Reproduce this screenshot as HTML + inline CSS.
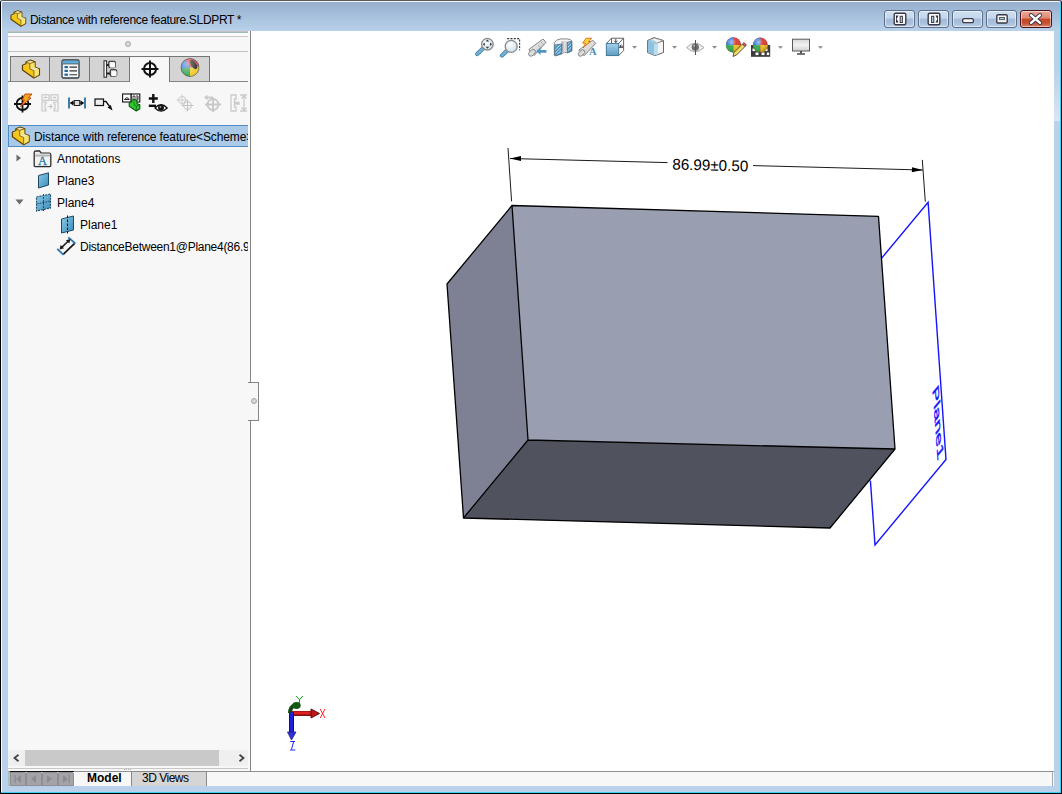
<!DOCTYPE html>
<html><head><meta charset="utf-8">
<style>
*{margin:0;padding:0;box-sizing:border-box}
html,body{width:1062px;height:794px;overflow:hidden;background:#b9d1ea;font-family:"Liberation Sans",sans-serif;font-size:12px;color:#000}
.a{position:absolute}
svg{position:absolute;overflow:visible}
#win{position:absolute;left:0;top:0;width:1062px;height:794px;background:#b9d1ea;border:1px solid #000;border-top-color:#5a5a5a;border-radius:3px 3px 0 0}
#titlegrad{position:absolute;left:1px;top:1px;width:1059px;height:30px;background:linear-gradient(#95afce,#b9d1ea);border-radius:2px 2px 0 0;border-top:1px solid #f4f8fc;border-left:1px solid #f4f8fc}
.btn{position:absolute;top:10px;width:31px;height:18px;border:1px solid #5d6f88;border-radius:3px;background:linear-gradient(#cfdff0 0%,#c3d6ec 45%,#a4bcd8 50%,#a9c1dc 75%,#bcd1e8 100%);box-shadow:inset 0 0 0 1px rgba(255,255,255,.5)}
.close{background:linear-gradient(#eaa898 0%,#de8a74 45%,#c4462a 50%,#c4502e 75%,#d8826a 100%);border-color:#4a1018}
#panel{position:absolute;left:8px;top:31px;width:242px;height:740px;background:#f7f7f7;overflow:hidden}
#vp{position:absolute;left:251px;top:31px;width:803px;height:740px;background:#fff;overflow:hidden}
.hl{position:absolute;height:1px}
.tab{position:absolute;top:25px;width:40px;height:25px;background:#d4d4d4;border:1px solid #767676;border-bottom:none}
.txt{position:absolute;white-space:nowrap;font-size:12px;line-height:14px}
</style></head><body>
<svg width="0" height="0" style="position:absolute"><defs>
<symbol id="part" viewBox="0 0 22 22">
  <path d="M3.0 7.2 L6.0 6.0 L6.0 4.3 L9.9 2.7 L13.9 4.3 L13.9 8.9 L17.7 10.2 L17.7 15.5 L12.9 18.2 L3.0 11.2 Z" fill="#f5c518" stroke="#5e4206" stroke-width="1.1" stroke-linejoin="round"/>
  <path d="M3.5 7.4 L6.0 6.4 L6.6 6.8 L4.2 7.9 Z" fill="#ecdca8"/>
  <path d="M6.5 4.4 L9.9 3.1 L13.4 4.5 L9.4 5.7 Z" fill="#efe2b0"/>
  <path d="M9.4 5.7 L13.5 4.5 L13.5 8.9 L9.4 10.2 Z" fill="#f6e472"/>
  <path d="M9.4 10.2 L13.5 8.9 L17.3 10.3 L12.9 11.9 Z" fill="#f2e6b4"/>
  <path d="M12.9 11.9 L17.3 10.3 L17.3 15.3 L12.9 17.8 Z" fill="#f6e470"/>
  <path d="M9.4 5.6 L9.4 10.2 L12.9 11.9 L12.9 18.2 M6.2 4.5 L9.4 5.6 L13.6 4.4" fill="none" stroke="#7a5a10" stroke-width="0.75"/>
</symbol>
</defs></svg>
<div id="win"></div>
<div id="titlegrad"></div>
<!-- right/bottom cyan edge -->
<div class="a" style="left:1060px;top:3px;width:1px;height:790px;background:#3fd0f0"></div>
<div class="a" style="left:1px;top:792px;width:1060px;height:1px;background:#3fd0f0"></div>
<div class="a" style="left:1px;top:31px;width:1px;height:761px;background:#fafcfe"></div>
<div class="a" style="left:1054px;top:70px;width:6px;height:51px;background:linear-gradient(#b9d1ea,#d8e6f4)"></div>

<!-- title icon -->
<svg style="left:8px;top:8px" width="22" height="22"><use href="#part"/></svg>
<div class="txt" style="left:30px;top:13px;letter-spacing:-0.33px;color:#000">Distance with reference feature.SLDPRT *</div>

<!-- caption buttons -->
<div class="btn" style="left:884px"><svg style="left:8px;top:1px" width="14" height="14" viewBox="0 0 14 14">
  <rect x="1.2" y="1.2" width="11.6" height="11.6" rx="1.5" fill="#fafafa" stroke="#3a3a48" stroke-width="1.4"/>
  <rect x="7.2" y="4.3" width="2.2" height="6.2" fill="#b8d4ee" stroke="#3a3a48" stroke-width="1"/>
  <path d="M3 3.5 L5.5 3.5 L3.5 7 L5.5 10.5 L3 10.5 Z" fill="#2a2a38"/>
</svg></div>
<div class="btn" style="left:918px"><svg style="left:8px;top:1px" width="14" height="14" viewBox="0 0 14 14">
  <rect x="1.2" y="1.2" width="11.6" height="11.6" rx="1.5" fill="#fafafa" stroke="#3a3a48" stroke-width="1.4"/>
  <rect x="4.6" y="4.3" width="2.2" height="6.2" fill="#b8d4ee" stroke="#3a3a48" stroke-width="1"/>
  <path d="M11 3.5 L8.5 3.5 L10.5 7 L8.5 10.5 L11 10.5 Z" fill="#2a2a38"/>
</svg></div>
<div class="btn" style="left:952px"><svg style="left:9px;top:7px" width="12" height="6" viewBox="0 0 12 6">
  <rect x="0.7" y="0.7" width="10.6" height="4" rx="1.2" fill="#f7f7f7" stroke="#3a3a48" stroke-width="1.3"/>
</svg></div>
<div class="btn" style="left:986px"><svg style="left:9px;top:3px" width="12" height="10" viewBox="0 0 12 10">
  <rect x="0.8" y="0.8" width="10.4" height="8.2" rx="1.2" fill="#f7f7f7" stroke="#3a3a48" stroke-width="1.4"/>
  <rect x="3.6" y="3.5" width="4.8" height="2.2" fill="#a8c8e6" stroke="#3a3a48" stroke-width="0.8"/>
</svg></div>
<div class="btn close" style="left:1020px;width:32px"><svg style="left:8px;top:3px" width="13" height="10" viewBox="0 0 13 10"><path d="M2 1.2 L11 8.8 M11 1.2 L2 8.8" stroke="#3a3a50" stroke-width="4.2" stroke-linecap="round"/><path d="M2 1.2 L11 8.8 M11 1.2 L2 8.8" stroke="#fff" stroke-width="2.4" stroke-linecap="round"/></svg></div>

<!-- ===== LEFT PANEL ===== -->
<div id="panel">
  <div class="hl" style="left:0;top:0;width:240px;background:#c4c0ba"></div>
  <div class="hl" style="left:0;top:1px;width:240px;background:#a0b9ba"></div>
  <div class="hl" style="left:0;top:2px;width:240px;height:3px;background:#fbfbfb"></div>
  <div class="hl" style="left:0;top:5px;width:240px;background:#c8c8c8"></div>
  <div class="a" style="left:117px;top:10px;width:6px;height:6px;border-radius:50%;background:radial-gradient(#e4e4e4,#c8c8c8);border:1px solid #a8a8a8"></div>
  <div class="hl" style="left:0;top:20px;width:240px;background:#c2c2c2"></div>
  <div id="panelbody">
  <!-- tabs -->
  <div class="hl" style="left:0;top:50px;width:240px;background:#858585"></div>
  <div class="tab" style="left:2px"></div>
  <div class="tab" style="left:41px;width:41px"></div>
  <div class="tab" style="left:81px;width:41px"></div>
  <div class="tab" style="left:121px;width:41px;background:#f7f7f7;height:26px"></div>
  <div class="tab" style="left:161px;width:41px"></div>
  <!-- tab icons -->
  <svg style="left:10.5px;top:25.5px" width="25.4" height="25.4" viewBox="0 0 22 22"><use href="#part" width="22" height="22"/></svg>
  <svg style="left:53px;top:28px" width="19" height="20" viewBox="0 0 19 20">
    <rect x="1" y="1" width="17" height="18" rx="1.5" fill="#f4f6f8" stroke="#2f3a44" stroke-width="1.3"/>
    <rect x="1.7" y="1.7" width="15.6" height="3" fill="#5aaedc"/>
    <path d="M1.5 4.9 H17.5" stroke="#2f3a44" stroke-width="0.8"/>
    <rect x="3.5" y="7" width="3.4" height="2.2" fill="#1e6aa0"/><rect x="3.5" y="10.8" width="3.4" height="2.2" fill="#1e6aa0"/><rect x="3.5" y="14.6" width="3.4" height="2.2" fill="#1e6aa0"/>
    <path d="M8.5 8.1 H16 M8.5 11.9 H16 M8.5 15.7 H16" stroke="#333" stroke-width="1.1"/>
  </svg>
  <svg style="left:95px;top:29px" width="18" height="18" viewBox="0 0 18 18">
    <rect x="1" y="0.8" width="2.6" height="16.4" fill="#fff" stroke="#222" stroke-width="1"/>
    <path d="M3.6 5 H6.5 M3.6 13.5 H7.5" stroke="#222" stroke-width="2"/>
    <rect x="5.8" y="1.2" width="6.5" height="6.5" rx="1.2" fill="#ddd" stroke="#222" stroke-width="1.1"/>
    <rect x="7.2" y="2.6" width="5" height="5" fill="#fafafa"/>
    <rect x="7.2" y="9.8" width="6.5" height="6.5" rx="1.2" fill="#ddd" stroke="#222" stroke-width="1.1"/>
    <rect x="8.6" y="11.2" width="5" height="5" fill="#fafafa"/>
  </svg>
  <svg style="left:133px;top:29px" width="18" height="18" viewBox="0 0 18 18">
    <circle cx="9" cy="9" r="6" fill="none" stroke="#111" stroke-width="2"/>
    <path d="M9 0.5 V17.5 M0.5 9 H17.5" stroke="#111" stroke-width="2"/>
  </svg>
  <svg style="left:172px;top:26px" width="20" height="21" viewBox="0 0 20 21">
    <defs><clipPath id="cw"><circle cx="10" cy="10.5" r="9"/></clipPath>
    <radialGradient id="sh" cx="0.35" cy="0.3" r="0.8"><stop offset="0" stop-color="#fff" stop-opacity="0.55"/><stop offset="1" stop-color="#fff" stop-opacity="0"/></radialGradient></defs>
    <g clip-path="url(#cw)">
      <rect x="0" y="0" width="20" height="21" fill="#2a6fd0"/>
      <path d="M10 10.5 L4 0 L20 0 L20 9 Z" fill="#e0302a"/>
      <path d="M10 10.5 L20 9 L20 21 L10 21 Z" fill="#f0c418"/>
      <path d="M10 10.5 L10 21 L0 21 L0 12 Z" fill="#28a040"/>
      <ellipse cx="13.5" cy="7.5" rx="2.6" ry="5.2" fill="#111" transform="rotate(-35 13.5 7.5)"/>
      <circle cx="10" cy="10.5" r="9" fill="url(#sh)"/>
    </g>
    <circle cx="10" cy="10.5" r="9" fill="none" stroke="#555" stroke-width="0.6"/>
  </svg>

  <!-- toolbar -->
  <svg style="left:5px;top:62px" width="20" height="20" viewBox="0 0 20 20">
    <circle cx="9.5" cy="11" r="6" fill="none" stroke="#111" stroke-width="1.8"/>
    <path d="M9.5 2.5 V19.5 M1 11 H18" stroke="#111" stroke-width="1.8"/>
    <path d="M12 1 L19 1 L15.5 5 L18 5 L7.5 13.5 L11.5 7 L9 7 Z" fill="#f2a81c" stroke="#c0380c" stroke-width="0.9" stroke-linejoin="round"/>
  </svg>
  <svg style="left:33px;top:63px" width="18" height="18" viewBox="0 0 18 18" fill="none" stroke="#c8c8c8" stroke-width="1.2">
    <rect x="1" y="0.8" width="7" height="5.5"/><rect x="10" y="0.8" width="7" height="5.5"/>
    <path d="M3 4 Q4.5 2.5 6 4 M12 4 Q13.5 2.5 15 4"/>
    <path d="M1 8 H5 V10 H4 V15 H5 V17 H1 Z M17 8 H13 V10 H14 V15 H13 V17 H17 Z"/>
    <path d="M6.5 12.5 H11 M9 10.5 L11 12.5 L9 14.5"/>
  </svg>
  <svg style="left:60px;top:63px" width="18" height="18" viewBox="0 0 18 18">
    <path d="M1 3.5 V14.5 M17 3.5 V14.5" stroke="#2a6ea0" stroke-width="1.8"/>
    <path d="M2.5 9 H15.5" stroke="#111" stroke-width="1.3"/>
    <path d="M2 9 L5.5 6.2 V11.8 Z M16 9 L12.5 6.2 V11.8 Z" fill="#111"/>
    <rect x="6.3" y="6.5" width="5.4" height="5" fill="#ddd" stroke="#222" stroke-width="1"/>
  </svg>
  <svg style="left:86px;top:63px" width="20" height="18" viewBox="0 0 20 18">
    <rect x="1" y="5" width="8.5" height="6.5" fill="#eee" stroke="#111" stroke-width="1.2"/>
    <path d="M9.5 7.5 H12 L16 13" fill="none" stroke="#111" stroke-width="1.3"/>
    <path d="M18.5 16.5 L13.5 13.5 L16.8 11 Z" fill="#111"/>
  </svg>
  <svg style="left:114px;top:62px" width="19" height="20" viewBox="0 0 19 20">
    <rect x="0.6" y="1" width="8.6" height="8" fill="#fff" stroke="#111" stroke-width="1.1"/>
    <rect x="9.2" y="1" width="8.6" height="8" fill="#fff" stroke="#111" stroke-width="1.1"/>
    <path d="M2.5 6.5 Q4.9 3 7.3 6.5 Z" fill="#fff" stroke="#111" stroke-width="0.9"/>
    <path d="M11 3 H13 V7 H11 Z M14 3 H16 V7 H14 M14 5 H16" stroke="#111" fill="none" stroke-width="0.8"/>
    <path d="M7.2 10 L9.6 8.8 L9.6 7.6 L12.3 6.4 L15 7.6 L15 10.8 L17.8 11.8 L17.8 15.8 L14.3 18 L7.2 13.2 Z" fill="#34c834" stroke="#0b5a0b" stroke-width="1.1" stroke-linejoin="round"/>
    <path d="M12 8.4 L12 11.8 L14.3 13.2 L14.3 18 M14.3 13.2 L17.6 11.9" fill="none" stroke="#0b5a0b" stroke-width="0.7"/>
  </svg>
  <svg style="left:140px;top:62px" width="20" height="20" viewBox="0 0 20 20">
    <path d="M5.3 1 V10 M0.8 5.5 H9.8" stroke="#111" stroke-width="2.4"/>
    <path d="M0.8 12.8 H8" stroke="#111" stroke-width="2.4"/>
    <path d="M7 15 Q13 8.5 19.2 15 Q13 21.2 7 15 Z" fill="#fff" stroke="#111" stroke-width="1.3"/>
    <circle cx="13" cy="14.8" r="3" fill="#111"/><circle cx="12.4" cy="14" r="0.9" fill="#999"/>
  </svg>
  <svg style="left:168px;top:63px" width="18" height="18" viewBox="0 0 18 18" fill="none" stroke="#d0d0d0" stroke-width="1.1">
    <circle cx="6" cy="6" r="3.5"/><path d="M6 0.5 V11.5 M0.5 6 H11.5"/>
    <circle cx="11.5" cy="11.5" r="3.8" stroke="#c4c4c4"/><path d="M11.5 5.5 V17.5 M5.5 11.5 H17.5" stroke="#c4c4c4"/>
  </svg>
  <svg style="left:195px;top:63px" width="18" height="18" viewBox="0 0 18 18" fill="none" stroke="#c8c8c8" stroke-width="1.8">
    <circle cx="10" cy="10.5" r="5.5"/><path d="M10 3.5 V18 M2 10.5 H18"/>
    <path d="M1 3.5 L4.5 0.8 V6.2 Z" fill="#c8c8c8" stroke="none"/><path d="M4 3.5 H10"/>
  </svg>
  <svg style="left:222px;top:63px" width="18" height="18" viewBox="0 0 18 18" fill="none" stroke="#cbcbcb" stroke-width="1.3">
    <path d="M1 1 H6 V5 H4.5 V8.5 H9 V10 H4.5 V13 H6 V17 H1 Z"/>
    <path d="M14 2 V16 M11.5 4.5 L14 1.5 L16.5 4.5 M11.5 13.5 L14 16.5 L16.5 13.5"/>
    <path d="M10 1 H17 M10 17 H17"/>
  </svg>

  <!-- selected root row -->
  <div class="a" style="left:0;top:94px;width:240px;height:22px;background:#abcae8;border-top:1px solid #4f8cc6;border-bottom:1px solid #4f8cc6;border-left:1px solid #4f8cc6"></div>
  <svg style="left:0.8px;top:92.9px" width="25" height="25" viewBox="0 0 22 22"><use href="#part" width="22" height="22"/></svg>
  <div class="txt" style="left:26px;top:99px;letter-spacing:-0.13px">Distance with reference feature&lt;Scheme&gt;</div>

  <!-- tree -->
  <svg style="left:8px;top:123px" width="6" height="8" viewBox="0 0 6 8"><path d="M0.5 0.5 L5 4 L0.5 7.5 Z" fill="#6b6b6b"/></svg>
  <svg style="left:25.2px;top:119px" width="19" height="18" viewBox="0 0 19 18">
    <path d="M1.2 2.6 Q1.2 1 2.8 1 H6.6 L8.2 3.1 H16.2 Q17.8 3.1 17.8 4.7 V15.6 Q17.8 16.6 16.8 16.6 H2.2 Q1.2 16.6 1.2 15.6 Z" fill="#f2f2f2" stroke="#2c2c2c" stroke-width="1.3"/>
    <rect x="1.9" y="3.6" width="15.2" height="2" fill="#d6d6d6"/>
    <path d="M1.8 5.9 H17.2" stroke="#888" stroke-width="0.8"/>
    <text x="9.6" y="15.2" text-anchor="middle" font-family="Liberation Serif" font-size="12.5" fill="#2a78a8" stroke="#2a78a8" stroke-width="0.3">A</text>
  </svg>
  <div class="txt" style="left:49px;top:121px">Annotations</div>

  <svg style="left:29px;top:141px" width="13" height="17" viewBox="0 0 13 17">
    <defs><linearGradient id="pg" x1="0" y1="0" x2="1" y2="1"><stop offset="0" stop-color="#8ccbe8"/><stop offset="1" stop-color="#3a8ab8"/></linearGradient></defs>
    <path d="M1.5 3.5 L11.5 0.8 L11.5 13 L1.5 16 Z" fill="url(#pg)" stroke="#1f4a68" stroke-width="1"/>
  </svg>
  <div class="txt" style="left:49px;top:143px">Plane3</div>

  <svg style="left:7px;top:168px" width="9" height="6" viewBox="0 0 9 6"><path d="M0.5 0.5 L8.5 0.5 L4.5 5.5 Z" fill="#6b6b6b"/></svg>
  <svg style="left:27px;top:162px" width="17" height="19" viewBox="0 0 17 19">
    <path d="M1.5 4 L15.5 1 L15.5 15 L1.5 18 Z" fill="url(#pg)" stroke="#1f4a68" stroke-width="1.1" stroke-dasharray="2 1"/>
    <path d="M8.5 1 V18.5 M1.5 11 L15.5 8" stroke="#1f4a68" stroke-width="1" stroke-dasharray="2 1"/>
  </svg>
  <div class="txt" style="left:49px;top:165px">Plane4</div>

  <svg style="left:52px;top:184px" width="15" height="19" viewBox="0 0 15 19">
    <path d="M1.5 4 L13.5 1 L13.5 15 L1.5 18 Z" fill="url(#pg)" stroke="#1f4a68" stroke-width="1"/>
    <path d="M7.5 0.5 V18.5" stroke="#111" stroke-width="1" stroke-dasharray="2.5 1.5"/>
  </svg>
  <div class="txt" style="left:72px;top:187px">Plane1</div>

  <svg style="left:49px;top:205px" width="20" height="20" viewBox="57 236 20 20">
    <path d="M63.2 254.4 L74.9 243.1" stroke="#1a1a1a" stroke-width="1.8"/>
    <path d="M57.2 248.8 L63.6 254.8" stroke="#2a78b0" stroke-width="1.8"/>
    <path d="M68.3 237.3 L75.3 243.5" stroke="#2a78b0" stroke-width="1.8"/>
    <path d="M61.5 247.6 L68.6 240.8" stroke="#1a1a1a" stroke-width="1.5"/>
    <path d="M59.6 249.4 L60.6 244.9 L64.1 248.2 Z M70.4 239 L65.9 240.2 L69.3 243.5 Z" fill="#1a1a1a"/>
  </svg>
  <div class="txt" style="left:72px;top:209px;letter-spacing:-0.27px">DistanceBetween1@Plane4(86.99)</div>

  <!-- scrollbar -->
  <div class="a" style="left:0;top:719px;width:240px;height:16px;background:#efefef"></div>
  <div class="a" style="left:17px;top:719px;width:194px;height:16px;background:#c9c9c9"></div>
  <svg style="left:5px;top:723px" width="7" height="8" viewBox="0 0 7 8"><path d="M5.5 0.8 L1.5 4 L5.5 7.2" fill="none" stroke="#444" stroke-width="1.8"/></svg>
  <svg style="left:230px;top:723px" width="7" height="8" viewBox="0 0 7 8"><path d="M1.5 0.8 L5.5 4 L1.5 7.2" fill="none" stroke="#444" stroke-width="1.8"/></svg>
  <div class="hl" style="left:0;top:737px;width:240px;background:#c6c6c6"></div>
</div>
</div>
<div id="vp">
<svg style="left:0;top:0" width="803" height="740" viewBox="251 31 803 740">
  <!-- heads-up toolbar -->
  <defs>
    <radialGradient id="lens" cx="0.4" cy="0.35" r="0.7"><stop offset="0" stop-color="#ffffff"/><stop offset="1" stop-color="#c9dce8"/></radialGradient>
    <linearGradient id="tel" x1="0" y1="0" x2="1" y2="1"><stop offset="0" stop-color="#fafafa"/><stop offset="1" stop-color="#bdbdbd"/></linearGradient>
    <linearGradient id="blu" x1="0" y1="0" x2="0" y2="1"><stop offset="0" stop-color="#a6d2ec"/><stop offset="1" stop-color="#5e9cc4"/></linearGradient>
    <linearGradient id="scr" x1="0" y1="0" x2="0" y2="1"><stop offset="0" stop-color="#d6d6d6"/><stop offset="0.5" stop-color="#f2f2f2"/><stop offset="1" stop-color="#d0d0d0"/></linearGradient>
    <radialGradient id="ballsh" cx="0.38" cy="0.32" r="0.7"><stop offset="0" stop-color="#fff" stop-opacity="0.55"/><stop offset="0.45" stop-color="#fff" stop-opacity="0.05"/><stop offset="1" stop-color="#000" stop-opacity="0.25"/></radialGradient>
    <clipPath id="ball1"><circle cx="733.5" cy="44.9" r="7.6"/></clipPath>
    <clipPath id="ball2"><circle cx="760.4" cy="44.9" r="7.4"/></clipPath>
  </defs>
  <!-- 1 zoom to fit -->
  <path d="M477.2 54 L483 48.5" stroke="#3f7ea6" stroke-width="4.2" stroke-linecap="round"/>
  <path d="M477.2 54 L483 48.5" stroke="#72b0d6" stroke-width="2.6" stroke-linecap="round"/>
  <circle cx="487.4" cy="44.2" r="5.8" fill="url(#lens)" stroke="#8a8a8a" stroke-width="1.3"/>
  <g fill="#3a3a3a"><path d="M487.4 39.6 L485.6 41.6 H489.2 Z M487.4 48.8 L485.6 46.8 H489.2 Z M482.8 44.2 L484.8 42.4 V46 Z M492 44.2 L490 42.4 V46 Z"/></g>
  <!-- 2 zoom to area -->
  <path d="M507.2 38.6 H519.6 V50.2" fill="none" stroke="#333" stroke-width="1.1" stroke-dasharray="2 1.3"/>
  <path d="M502 55.5 L507.2 50.5" stroke="#3f7ea6" stroke-width="4.2" stroke-linecap="round"/>
  <path d="M502 55.5 L507.2 50.5" stroke="#72b0d6" stroke-width="2.6" stroke-linecap="round"/>
  <circle cx="511.2" cy="46.4" r="6" fill="url(#lens)" stroke="#8a8a8a" stroke-width="1.3"/>
  <!-- 3 previous view -->
  <path d="M528.8 49.5 L543.1 39 L546.1 42.2 L534.2 55.5 Z" fill="url(#tel)" stroke="#7a7a7a" stroke-width="0.9" stroke-linejoin="round"/>
  <ellipse cx="532" cy="52.8" rx="2.6" ry="4" transform="rotate(45 532 52.8)" fill="#dcdcdc" stroke="#777" stroke-width="0.8"/>
  <path d="M538 45 L541.5 48.5 M541 42 L544 45" stroke="#999" stroke-width="0.7"/>
  <path d="M536.2 51.3 L540.5 47.6 V49.9 H546.4 V52.7 H540.5 V55 Z" fill="#4e96c4"/>
  <!-- 4 section view -->
  <defs><pattern id="hatch" width="2.4" height="2.4" patternUnits="userSpaceOnUse" patternTransform="rotate(-45)"><rect width="2.4" height="2.4" fill="#3f7fa8"/><rect width="2.4" height="1.2" fill="#a6dcf4"/></pattern>
  <linearGradient id="inner" x1="0" y1="0" x2="1" y2="0"><stop offset="0" stop-color="#9a9a9a"/><stop offset="0.5" stop-color="#e0e0e0"/><stop offset="1" stop-color="#c8c8c8"/></linearGradient></defs>
  <path d="M554.3 55.2 V42.6 Q556 39.2 561 38.9 H567.5 Q571.5 39.4 571.9 41.4 V51 L567.4 52.8 Q564.5 50.8 561.8 53.8 L555.6 55.8 Z" fill="#f4f4f4" stroke="#7a7a7a" stroke-width="0.9" stroke-linejoin="round"/>
  <path d="M561.6 41.6 Q564.5 40.4 567.2 41.6 V51.6 Q564.5 50.4 561.6 52.6 Z" fill="url(#inner)"/>
  <path d="M554.8 45 L561.7 44 V53.7 L555.6 55.7 L554.8 55.2 Z" fill="url(#hatch)" stroke="#2f5f80" stroke-width="0.7"/>
  <path d="M567.3 42.2 L571.6 41.4 V51 L567.5 52.6 Z" fill="url(#hatch)" stroke="#2f5f80" stroke-width="0.7"/>
  <!-- 5 dynamic annotation -->
  <path d="M578.8 50 L592.8 40.2 L595.8 43.4 L584 55.8 Z" fill="url(#tel)" stroke="#7a7a7a" stroke-width="0.9" stroke-linejoin="round"/>
  <ellipse cx="581.5" cy="53" rx="2.4" ry="3.8" transform="rotate(45 581.5 53)" fill="#dcdcdc" stroke="#777" stroke-width="0.8"/>
  <path d="M586 38.2 H591.6 L588.4 41.5 H590.6 L583 47.8 L585.6 43.2 H582.6 Z" fill="#f8d63a" stroke="#d86a20" stroke-width="0.9" stroke-linejoin="round"/>
  <text x="592.8" y="55.2" text-anchor="middle" font-family="Liberation Serif" font-size="10.5" font-weight="bold" fill="#4a8ab8">A</text>
  <!-- 6 view orientation -->
  <path d="M606.5 43.5 L611.5 38.2 H623.6 V50.6 L618.6 55.6" fill="#fff" stroke="#555" stroke-width="0.9"/>
  <path d="M618.6 43.5 L623.6 38.2" stroke="#555" stroke-width="0.9"/>
  <path d="M611.5 38.2 V43.4 M618.6 47.5 H623.6" stroke="#555" stroke-width="0.9" fill="none"/><path d="M615.8 38.8 V42.2 M614.3 40.8 L615.8 42.6 L617.3 40.8 M623 46.2 H620 M621.4 44.7 L619.7 46.2 L621.4 47.7" stroke="#444" stroke-width="1" fill="none"/>
  <rect x="606.3" y="43.4" width="12.4" height="12.2" fill="url(#blu)" stroke="#3a6f90" stroke-width="0.9"/>
  <path d="M632 46 H637 L634.5 48.8 Z" fill="#8a8a8a"/>
  <!-- 7 display style -->
  <path d="M647.5 40.5 L654 37.6 L663.5 40.5 V52.5 L655 55.6 L647.5 52.5 Z" fill="#f4f4f4" stroke="#666" stroke-width="1"/>
  <path d="M647.8 40.8 L654.5 43.5 V55.2 L647.8 52.3 Z" fill="#8cc2e0"/>
  <path d="M654.5 43.5 L663 40.8 M654.5 43.5 L663 40.8" stroke="#777" stroke-width="0.8"/>
  <path d="M654.5 43.2 L658 42 V54.3 L654.5 55.4 Z" fill="#b8e0f2"/>
  <path d="M648 40.7 L654.3 38 L663 40.6 L656.5 43.2 Z" fill="#f2f2f2" stroke="#777" stroke-width="0.6"/><path d="M648.2 40.7 L651.5 39.3 L657 41.9 L654.5 43 Z" fill="#9fd0ea"/>
  <path d="M672 46 H677 L674.5 48.8 Z" fill="#8a8a8a"/>
  <!-- 8 hide/show -->
  <path d="M686.5 47.5 Q695 39 704 47.5 Q695 56 686.5 47.5 Z" fill="#f0f0f0" stroke="#a8a8a8" stroke-width="1"/>
  <circle cx="695.3" cy="47.2" r="3.6" fill="#6e6e6e"/>
  <circle cx="694.3" cy="45.8" r="1" fill="#bbb"/>
  <path d="M695.5 40 V55" stroke="#555" stroke-width="1"/>
  <path d="M712 46 H717 L714.5 48.8 Z" fill="#8a8a8a"/>
  <!-- 9 edit appearance -->
  <g clip-path="url(#ball1)">
    <rect x="725" y="36" width="18" height="18" fill="#d83a32"/>
    <path d="M733.5 44.9 L733.5 36 L725 36 L725 44.9 Z" fill="#3a7ad8"/>
    <path d="M733.5 44.9 L725 44.9 L725 54 L733.5 54 Z" fill="#2ea84a"/>
    <path d="M733.5 44.9 L742 44.9 L742 54 L733.5 54 Z" fill="#f0c020"/>
    <circle cx="733.5" cy="44.9" r="7.6" fill="url(#ballsh)"/>
  </g>
  <path d="M733 56.5 L734 52.5 L742.5 44 L745 46.5 L736.5 55 Z" fill="#f4dc60" stroke="#444" stroke-width="0.9" stroke-linejoin="round"/>
  <path d="M742.5 44 L744 42.5 L746.5 45 L745 46.5 Z" fill="#e05050" stroke="#444" stroke-width="0.7"/>
  <!-- 10 apply scene -->
  <rect x="751" y="45" width="19.2" height="11.8" fill="#3a3a3a"/>
  <g fill="#fff"><rect x="752.5" y="48.5" width="3" height="2.6"/><rect x="758.5" y="48.5" width="3" height="2.6"/><rect x="764.5" y="48.5" width="3" height="2.6"/><rect x="755.5" y="52.5" width="3" height="2.6"/><rect x="761.5" y="52.5" width="3" height="2.6"/><rect x="766.8" y="52.5" width="2.4" height="2.6"/></g>
  <g clip-path="url(#ball2)">
    <rect x="752" y="36" width="18" height="18" fill="#d83a32"/>
    <path d="M760.4 44.9 L760.4 36 L752 36 L752 44.9 Z" fill="#3a7ad8"/>
    <path d="M760.4 44.9 L752 44.9 L752 54 L760.4 54 Z" fill="#2ea84a"/>
    <path d="M760.4 44.9 L769 44.9 L769 54 L760.4 54 Z" fill="#f0c020"/>
    <circle cx="760.4" cy="44.9" r="7.4" fill="url(#ballsh)"/>
  </g>
  <path d="M778 46.3 H783 L780.5 48.8 Z" fill="#8a8a8a"/>
  <!-- 11 view settings -->
  <rect x="792.5" y="39.2" width="17" height="11.8" fill="url(#scr)" stroke="#5a5a5a" stroke-width="1"/>
  <rect x="800" y="51" width="2" height="2.5" fill="#555"/>
  <rect x="797" y="53.2" width="8" height="1.6" fill="#555"/>
  <path d="M818 46.3 H823 L820.5 48.8 Z" fill="#8a8a8a"/>

  <!-- triad -->
  <g>
    <path d="M292 713.5 H313" stroke="#7a1010" stroke-width="5"/>
    <path d="M292 713 H313" stroke="#e02020" stroke-width="3"/>
    <path d="M311 709 L319.5 713.5 L311 718 Z" fill="#c01818" stroke="#601010" stroke-width="1"/>
    <path d="M291.5 712 V734" stroke="#101070" stroke-width="5"/>
    <path d="M291.5 712 V734" stroke="#2020d8" stroke-width="3"/>
    <path d="M287.5 732 L291.5 740 L296 732 Z" fill="#3030e0" stroke="#202080" stroke-width="0.8"/>
    <path d="M290 713 Q290 707 295 705" stroke="#104a10" stroke-width="4" fill="none"/>
    <ellipse cx="296.5" cy="705.5" rx="4.2" ry="3.4" fill="#145a14"/>
    <path d="M299.5 703 L299.5 699.8 M296.2 696 L299.5 699.8 L302.8 696" stroke="#10a010" stroke-width="1" fill="none"/>
    <path d="M320.2 709 L325 718 M325 709 L320.2 718" stroke="#ff2020" stroke-width="1"/>
    <path d="M290.2 741.5 H295 M293.5 742 L291.5 749.5 M290 750 H295.3" stroke="#2020ff" stroke-width="1" fill="none"/>
  </g>
  <!-- blue plane (behind) -->
  <g stroke="#1414ff" stroke-width="1.4" fill="none">
    <path d="M881.7 258.1 L928.1 202.3 L946 459.4 L875 545 L870.4 480.6"/>
  </g>
  <!-- box faces -->
  <path d="M512 205.5 L447 284 L463.5 518 L528 440 Z" fill="#7e8194"/>
  <path d="M528 440 L895 449 L830 528 L463.5 518 Z" fill="#50525e"/>
  <path d="M512 205.5 L878.5 216.3 L895 449 L528 440 Z" fill="#999eb0"/>
  <g stroke="#000" stroke-width="1.3" fill="none" stroke-linejoin="round">
    <path d="M512 205.5 L878.5 216.3 L895 449 L830 528 L463.5 518 L447 284 Z"/>
    <path d="M512 205.5 L528 440 L895 449 M528 440 L463.5 518"/>
  </g>
  <!-- dimension -->
  <g stroke="#000" stroke-width="0.9" fill="none">
    <path d="M508 148 L511.6 201.4"/>
    <path d="M922.3 159.9 L925.3 201.7"/>
    <path d="M510 158.5 L667.5 162.6"/>
    <path d="M753 165.6 L922.8 170"/>
  </g>
  <path d="M510 158.5 L521 156 L521 161 Z" fill="#000"/>
  <path d="M922.8 170 L911.8 172.2 L912 167.2 Z" fill="#000"/>
  <text x="0" y="0" font-size="15.5" font-family="Liberation Sans" fill="#000" textLength="76" lengthAdjust="spacingAndGlyphs" transform="translate(672.2 169.6) rotate(1.3)">86.99±0.50</text>
  <!-- plane label -->
  <text x="0" y="0" font-size="13.5" font-family="Liberation Sans" fill="#1414ff" stroke="#1414ff" stroke-width="0.45" textLength="71" lengthAdjust="spacingAndGlyphs" transform="matrix(0.0693 0.9976 -0.637 0.771 932.6 390.5)">Plane1</text>
</svg>
</div>

<!-- separator -->
<div class="a" style="left:248px;top:31px;width:2px;height:740px;background:#f8f8f8"></div>
<div class="a" style="left:250px;top:31px;width:1px;height:740px;background:#858585"></div>
<div class="a" style="left:248px;top:382px;width:11px;height:39px;background:#f7f7f7;border:1px solid #858585;border-left:none"></div>
<div class="a" style="left:251px;top:398px;width:6px;height:6px;border-radius:50%;background:radial-gradient(#e4e4e4,#c4c4c4);border:1px solid #a4a4a4"></div>

<!-- bottom bar -->
<div class="a" style="left:8px;top:771px;width:1046px;height:15px;background:#f7f7f7;border-top:1px solid #8f8f8f"></div>
<div class="a" style="left:8px;top:772px;width:2px;height:14px;background:#a9c0c4"></div>
<div class="a" style="left:10px;top:771px;width:64px;height:1px;background:#111"></div>
<div class="a" style="left:10px;top:772px;width:64px;height:14px;background:#a4a4a8"></div>
<svg style="left:10px;top:772px" width="64" height="14" viewBox="0 0 64 14">
  <g fill="none" stroke="#8a8a8e" stroke-width="0.8"><rect x="0.5" y="0.5" width="15" height="13"/><rect x="16.5" y="0.5" width="15" height="13"/><rect x="32.5" y="0.5" width="15" height="13"/><rect x="48.5" y="0.5" width="15" height="13"/></g>
  <g fill="#8c8c90"><rect x="4.5" y="3" width="1.3" height="8"/><path d="M11 3 L6 7 L11 11 Z"/><path d="M26 3 L21 7 L26 11 Z"/><path d="M37 3 L42 7 L37 11 Z"/><path d="M53 3 L58 7 L53 11 Z"/><rect x="58.5" y="3" width="1.3" height="8"/></g>
  <g fill="#fff"><rect x="15.5" y="0" width="1" height="1"/><rect x="31.5" y="0" width="1" height="1"/><rect x="47.5" y="0" width="1" height="1"/><rect x="63" y="0" width="1" height="1"/></g>
</svg>
<div class="a" style="left:74px;top:772px;width:57px;height:14px;background:#f7f7f7"></div>
<div class="txt" style="left:87px;top:771px;font-weight:bold;font-size:12px;line-height:15px">Model</div>
<div class="a" style="left:131px;top:771px;width:76px;height:15px;background:#d5d5d5;border:1px solid #8a8a8a;border-bottom:none"></div>
<div class="txt" style="left:142px;top:771px;font-size:12px;line-height:15px;letter-spacing:-0.5px">3D Views</div>
<div class="a" style="left:1052px;top:772px;width:1px;height:14px;background:#a8a8a8"></div>
<div class="a" style="left:124px;top:769px;width:8px;height:1px;background:repeating-linear-gradient(90deg,#b0b0b0 0 1px,transparent 1px 2px)"></div>
</body></html>
